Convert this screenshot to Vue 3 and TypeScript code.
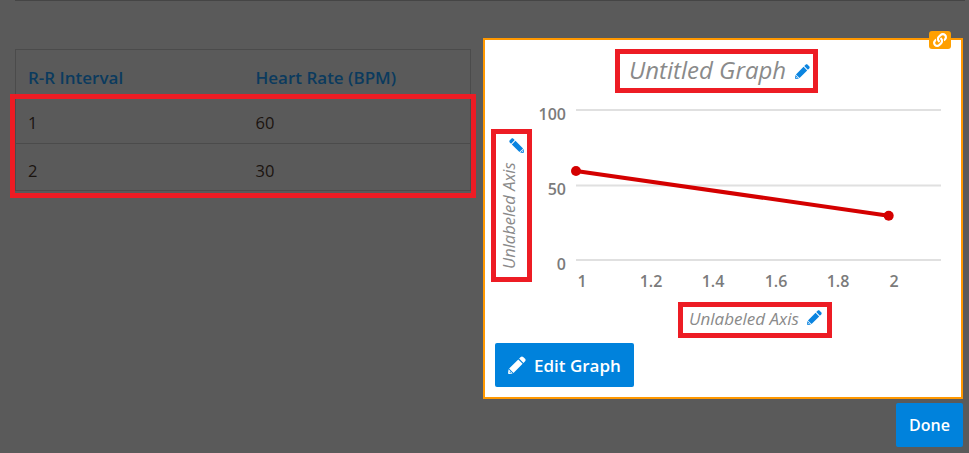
<script setup lang="ts">
const pencil = "M362 26c19-19 50-19 69 0l55 55c19 19 19 50 0 69l-46 46L316 72zM292 96l124 124L156 480 32 356zM16 378l118 118-100 15c-17 2-33-14-31-31zM62 442a18 18 0 1 0 .1 0z";
const link = "M326.612 185.391c59.747 59.809 58.927 155.698.36 214.59-.11.12-.24.25-.36.37l-67.2 67.2c-59.27 59.27-155.699 59.262-214.96 0-59.27-59.26-59.27-155.7 0-214.96l37.106-37.106c9.84-9.84 26.786-3.3 27.294 10.606.648 17.722 3.826 35.527 9.69 52.721 1.986 5.822.567 12.262-3.783 16.612l-13.087 13.087c-28.026 28.026-28.905 73.66-1.155 101.96 28.024 28.579 74.086 28.749 102.325.51l67.2-67.19c28.191-28.191 28.073-73.757 0-101.83-3.701-3.694-7.429-6.564-10.341-8.569a16.037 16.037 0 0 1-6.947-12.606c-.396-10.567 3.348-21.456 11.698-29.806l21.054-21.055c5.521-5.521 14.182-6.199 20.584-1.731a152.482 152.482 0 0 1 20.522 17.197zM467.547 44.449c-59.261-59.262-155.69-59.27-214.96 0l-67.2 67.2c-.12.12-.25.25-.36.37-58.566 58.892-59.387 154.781.36 214.59a152.454 152.454 0 0 0 20.521 17.196c6.402 4.468 15.064 3.789 20.584-1.731l21.054-21.055c8.35-8.35 12.094-19.239 11.698-29.806a16.037 16.037 0 0 0-6.947-12.606c-2.912-2.005-6.64-4.875-10.341-8.569-28.073-28.073-28.191-73.639 0-101.83l67.2-67.19c28.239-28.239 74.3-28.069 102.325.51 27.75 28.3 26.872 73.934-1.155 101.96l-13.087 13.087c-4.35 4.35-5.769 10.79-3.783 16.612 5.864 17.194 9.042 34.999 9.69 52.721.509 13.906 17.454 20.446 27.294 10.606l37.106-37.106c59.271-59.259 59.271-155.699.001-214.959z";
const rows = [
  { interval: 1, rate: 60 },
  { interval: 2, rate: 30 },
];
const gridLines = [10, 85.5, 160];
const yTicks = [
  { label: "100", y: 20 },
  { label: "50", y: 95 },
  { label: "0", y: 170 },
];
const xTicks = [
  { label: "1", x: 47 },
  { label: "1.2", x: 116 },
  { label: "1.4", x: 178 },
  { label: "1.6", x: 241 },
  { label: "1.8", x: 303 },
  { label: "2", x: 359 },
];
</script>

<template>
  <div class="page">
    <div class="rule"></div>
    <div class="main">
      <div class="table-wrap">
        <table class="data">
          <thead>
            <tr><th class="c1">R-R Interval</th><th>Heart Rate (BPM)</th></tr>
          </thead>
          <tbody>
            <tr v-for="r in rows" :key="r.interval">
              <td>{{ r.interval }}</td><td>{{ r.rate }}</td>
            </tr>
          </tbody>
        </table>
        <div class="table-mark"></div>
      </div>
      <div class="side">
        <div class="card">
          <span class="link-badge">
            <svg viewBox="0 0 512 512" width="14" height="14"><path :d="link" fill="#fff" /></svg>
          </span>
          <div class="mark title-box">
            <span class="title">Untitled Graph</span>
            <svg class="pen pen-title" viewBox="0 0 512 512"><path :d="pencil" fill-rule="evenodd" /></svg>
          </div>
          <div class="chart-row">
            <div class="mark y-box">
              <div class="y-inner">
                <span class="axis axis-y">Unlabeled Axis</span>
                <svg class="pen pen-y" viewBox="0 0 512 512"><path :d="pencil" fill-rule="evenodd" /></svg>
              </div>
            </div>
            <svg class="chart" width="412" height="195" viewBox="0 0 412 195">
              <line v-for="y in gridLines" :key="y" x1="41" x2="406" :y1="y" :y2="y" class="grid" />
              <text v-for="t in yTicks" :key="t.label" x="31" :y="t.y" text-anchor="end" class="tick">{{ t.label }}</text>
              <text v-for="t in xTicks" :key="t.label" :x="t.x" y="187" text-anchor="middle" class="tick">{{ t.label }}</text>
              <line x1="41" y1="71" x2="353.7" y2="115.7" class="series" />
              <circle cx="41" cy="71" r="5" class="dot" />
              <circle cx="353.7" cy="115.7" r="5" class="dot" />
            </svg>
          </div>
          <div class="mark x-box">
            <span class="axis">Unlabeled Axis</span>
            <svg class="pen pen-x" viewBox="0 0 512 512"><path :d="pencil" fill-rule="evenodd" /></svg>
          </div>
          <button class="btn edit" type="button">
            <svg viewBox="0 0 512 512" width="18" height="18"><path :d="pencil" fill="#fff" fill-rule="evenodd" /></svg>
            <span>Edit Graph</span>
          </button>
        </div>
        <button class="btn done" type="button">Done</button>
      </div>
    </div>
  </div>
</template>

<style>
html, body { margin: 0; background: #5a5a5a; }
</style>

<style scoped>
.page {
  width: 969px;
  height: 453px;
  overflow: hidden;
  background: #5a5a5a;
  font-family: "Open Sans", "Noto Sans", sans-serif;
  font-size: 16px;
  box-sizing: border-box;
}
.rule {
  height: 1px;
  margin: 0 4px 0 15px;
  background: #454545;
}
.main {
  display: flex;
  align-items: flex-start;
}
.table-wrap {
  position: relative;
  width: 456px;
  margin: 48px 0 0 15px;
}
.data {
  width: 100%;
  border-collapse: collapse;
  border: 1px solid #4b4b4b;
  table-layout: fixed;
}
.data th {
  height: 45px;
  padding: 10px 12px 0;
  box-sizing: border-box;
  text-align: left;
  font-size: 17px;
  font-weight: 600;
  color: #0b3a5e;
}
.data th.c1 { width: 228px; }
.data td {
  height: 47.5px;
  padding: 8px 12px 0;
  box-sizing: border-box;
  color: #1a1410;
  border-top: 1px solid #4b4b4b;
  font-size: 16.5px;
}
.data tbody tr:first-child td { border-top: none; height: 48.5px; }
.table-mark {
  position: absolute;
  left: -5px;
  right: -5px;
  top: 45px;
  bottom: -7px;
  border: 5px solid #ed1c24;
}
.side {
  margin: 37px 0 0 12px;
  width: 480px;
  display: flex;
  flex-direction: column;
  align-items: flex-end;
}
.card {
  position: relative;
  width: 100%;
  height: 361px;
  box-sizing: border-box;
  padding-top: 9px;
  border: 2px solid #ff9800;
  background: #fff;
  display: flex;
  flex-direction: column;
  align-items: flex-start;
}
.link-badge {
  position: absolute;
  top: -9px;
  right: 10px;
  width: 22px;
  height: 18px;
  border-radius: 3px;
  background: #ffa000;
  display: flex;
  align-items: center;
  justify-content: center;
}
.mark {
  border: 5px solid #ed1c24;
  box-sizing: border-box;
  display: flex;
}
.title-box {
  width: 203px;
  height: 44px;
  margin-left: 130px;
  padding-left: 9px;
  padding-bottom: 3px;
  align-items: center;
}
.title {
  font-size: 24px;
  font-style: italic;
  color: #8a8a8a;
  line-height: 30px;
}
.pen { fill: #0a84e0; flex: none; }
.pen-title { width: 15px; height: 15px; margin-left: 9px; margin-top: 3px; }
.chart-row {
  display: flex;
  align-items: flex-start;
  height: 195px;
  margin-top: 7px;
  margin-left: 6px;
}
.y-box {
  width: 41px;
  height: 153px;
  margin-top: 29px;
  justify-content: center;
}
.y-inner {
  writing-mode: vertical-rl;
  transform: rotate(180deg);
  display: flex;
  align-items: center;
  line-height: 20px;
  padding-top: 8px;
  margin-right: 6px;
}
.pen-y {
  width: 15px;
  height: 15px;
  margin-top: 9px;
  margin-left: -16px;
  transform: rotate(90deg);
}
.axis {
  font-size: 17px;
  font-style: italic;
  color: #8a8a8a;
  line-height: 20px;
}
.axis-y { font-size: 16.5px; }
.chart {
  display: block;
  flex: none;
  margin-left: 3px;
}
.grid { stroke: #e0e0e0; stroke-width: 2; }
.tick {
  font-family: "Open Sans", sans-serif;
  font-size: 16px;
  font-weight: 600;
  fill: #7b7b7b;
}
.series { stroke: #d40000; stroke-width: 4; }
.dot { fill: #d40000; }
.x-box {
  width: 154px;
  height: 36px;
  margin: 7px 0 0 193px;
  padding-left: 6px;
  padding-bottom: 3px;
  align-items: center;
}
.pen-x { width: 15px; height: 15px; margin-left: 8px; margin-bottom: 2px; }
.btn {
  border: none;
  border-radius: 2px;
  background: #0082dc;
  color: #fff;
  font-family: "Open Sans", sans-serif;
  font-size: 16px;
  font-weight: 600;
  height: 44px;
  padding: 0;
}
.edit {
  width: 139px;
  margin: 5px 0 0 10px;
  display: flex;
  align-items: center;
  justify-content: flex-start;
  gap: 8px;
  padding-left: 13px;
  box-sizing: border-box;
  font-size: 17px;
}
.done {
  width: 67px;
  margin-top: 4px;
}
</style>
